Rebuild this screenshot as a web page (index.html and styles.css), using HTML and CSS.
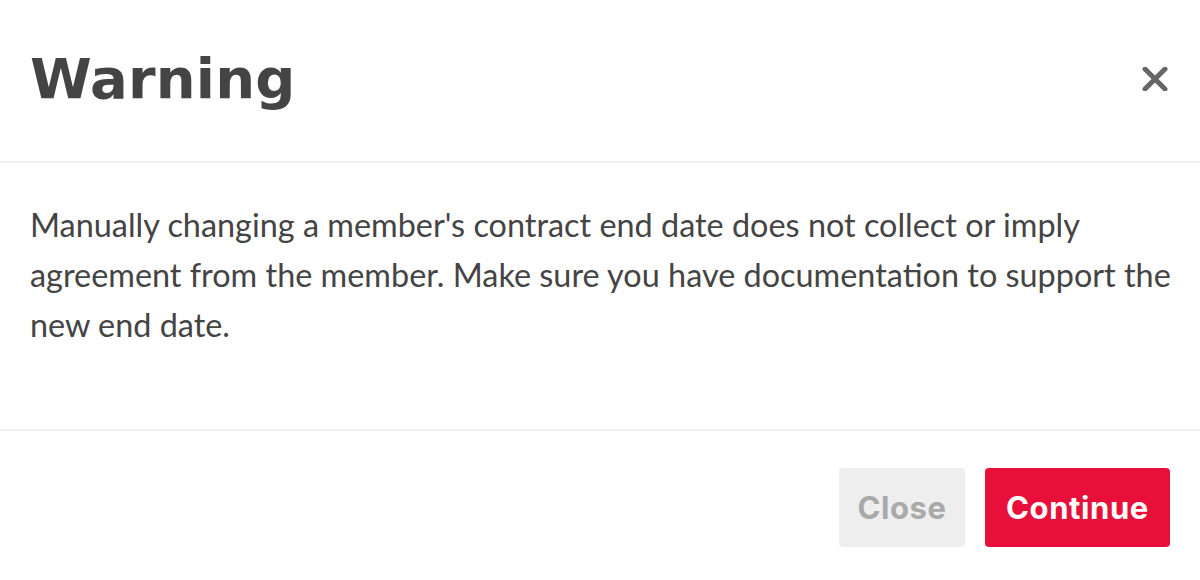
FILE: index.html
```html
<!DOCTYPE html>
<html>
<head>
<meta charset="utf-8">
<link rel="stylesheet" href="styles.css">
</head>
<body>
<div class="modal">
  <div class="modal-header">
    <h1 class="modal-title">Warning</h1>
    <button class="close-x" aria-label="Close">
      <svg width="26" height="24" viewBox="0 0 26 24"><path d="M3 2 L23 22 M23 2 L3 22" stroke="#666" stroke-width="5" stroke-linecap="round"/></svg>
    </button>
  </div>
  <div class="modal-body">
    <p class="message">Manually changing a member's contract end date does not collect or imply agreement from the member. Make sure you have documentation to support the new end date.</p>
  </div>
  <div class="modal-footer">
    <button class="btn btn-close">Close</button>
    <button class="btn btn-continue">Continue</button>
  </div>
</div>
</body>
</html>
```
FILE: styles.css
```css
html, body { margin: 0; padding: 0; background: #fff; }
.modal { width: 1200px; height: 580px; display: flex; flex-direction: column; }
.modal-header {
  height: 163px; flex: none; box-sizing: border-box; padding: 0 30px 4px 30px;
  display: flex; align-items: center; justify-content: space-between;
  border-bottom: 2px solid #eceeef;
}
.modal-title {
  margin: 0; font-family: "DejaVu Sans", Inter, sans-serif; font-weight: 700;
  font-size: 56px; color: #444; letter-spacing: 0.2px; line-height: 1;
}
.close-x { border: 0; background: none; padding: 0; margin-right: 2px; display: flex; }
.modal-body { height: 268px; flex: none; box-sizing: border-box; padding: 37px 20px 0 30px; border-bottom: 2px solid #eceeef; }
.message {
  margin: 0; font-family: Lato, "Liberation Sans", sans-serif; font-size: 32.4px;
  line-height: 50px; color: #444;
}
.modal-footer { display: flex; justify-content: flex-end; gap: 20px; padding: 37px 30px 0 0; }
.btn {
  height: 79px; border: 0; border-radius: 4px; font-family: Inter, "Liberation Sans", sans-serif;
  font-weight: 700; font-size: 31px; letter-spacing: 0.6px; padding: 0;
}
.btn-close { width: 126px; background: #eeeeee; color: #a9a9a9; }
.btn-continue { width: 185px; background: #e8103a; color: #fff; }
```
